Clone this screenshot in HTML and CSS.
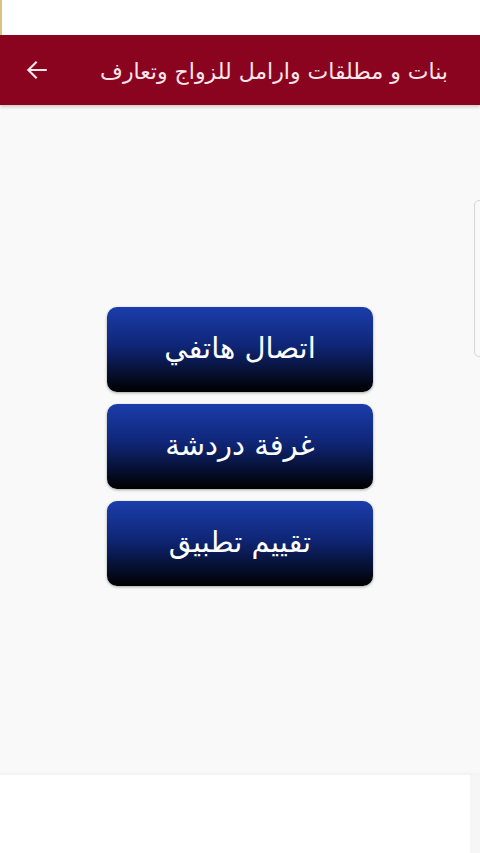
FILE: index.html
```html
<!DOCTYPE html>
<html lang="ar">
<head>
<meta charset="utf-8">
<title>بنات و مطلقات وارامل للزواج وتعارف</title>
<link rel="stylesheet" href="styles.css">
</head>
<body>
<div class="statusbar"></div>
<header class="appbar">
  <h1 class="title" dir="rtl">بنات و مطلقات وارامل للزواج وتعارف</h1>
  <span class="back" aria-label="back">
    <svg width="26" height="26" viewBox="0 0 24 24"><path d="M20 12H5M11 5l-7 7 7 7" fill="none" stroke="#fbe6ea" stroke-width="2" stroke-linecap="square"/></svg>
  </span>
</header>
<main class="content">
  <div class="menu">
    <button class="btn" dir="rtl">اتصال هاتفي</button>
    <button class="btn" dir="rtl">غرفة دردشة</button>
    <button class="btn" dir="rtl">تقييم تطبيق</button>
  </div>
  <div class="sidetab"></div>
</main>
<footer class="bottom">
  <div class="bottom-main"></div>
  <div class="bottom-edge"></div>
</footer>
</body>
</html>
```
FILE: styles.css
```css
html, body {
  margin: 0;
  padding: 0;
}
body {
  width: 480px;
  height: 853px;
  overflow: hidden;
  background: #f9f9f9;
  font-family: "DejaVu Sans", "Noto Sans", sans-serif;
}
.statusbar {
  height: 35px;
  background: #ffffff;
  border-left: 2px solid #d9c47e;
  box-sizing: border-box;
}
.appbar {
  height: 70px;
  background: #8a0420;
  display: flex;
  flex-direction: row-reverse;
  align-items: center;
  justify-content: space-between;
  padding: 0 32px 0 24px;
  box-shadow: 0 2px 3px rgba(0,0,0,0.18);
  position: relative;
  z-index: 1;
}
.title {
  margin: 0;
  font-size: 22px;
  font-weight: normal;
  color: #fbe6ea;
  white-space: nowrap;
  padding-top: 2px;
}
.back {
  display: flex;
  align-items: center;
}
.content {
  height: 670px;
  position: relative;
  display: flex;
  flex-direction: column;
  align-items: center;
  padding-top: 202px;
  box-sizing: border-box;
}
.menu {
  display: flex;
  flex-direction: column;
  gap: 12px;
}
.btn {
  width: 266px;
  height: 85px;
  border: none;
  border-radius: 10px;
  background: linear-gradient(to bottom, #1b3dab 0%, #0f2677 45%, #000000 100%);
  color: #ffffff;
  font-family: "DejaVu Sans", sans-serif;
  font-size: 29px;
  box-shadow: 0 1px 3px rgba(0,0,0,0.35);
  padding: 0 0 4px 0;
}
.sidetab {
  position: absolute;
  right: -4px;
  top: 95px;
  width: 10px;
  height: 157px;
  border: 1px solid #d6d6d6;
  border-radius: 6px;
  box-sizing: border-box;
}
.bottom {
  height: 78px;
  display: flex;
  box-shadow: 0 -2px 3px rgba(0,0,0,0.03);
}
.bottom-main {
  flex: 1;
  background: #ffffff;
}
.bottom-edge {
  width: 10px;
  background: #f6f6f6;
}
```
